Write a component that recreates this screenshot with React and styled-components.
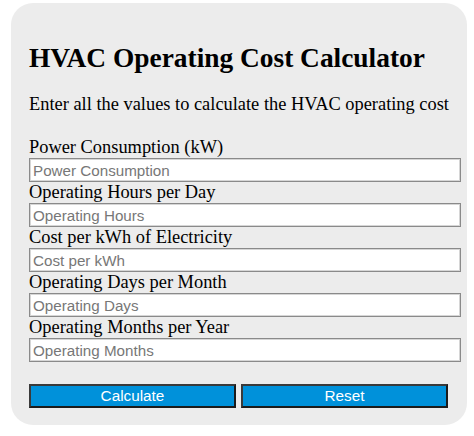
import React from "react";
import styled, { createGlobalStyle } from "styled-components";

const Global = createGlobalStyle`
  html, body { margin: 0; padding: 0; background: #ffffff; }
  body { font-family: "Liberation Serif", "Times New Roman", serif; color: #000; }
`;

const Card = styled.div`
  box-sizing: border-box;
  width: 456px;
  margin: 3px 0 0 11px;
  padding: 22px 6px 17px 18px;
  background: #ececec;
  border-radius: 22px;
`;

const Title = styled.h2`
  font-family: "Liberation Serif", "Times New Roman", serif;
  font-weight: bold;
  font-size: 27.4px;
  line-height: 32px;
  margin: 17px 0 0 0;
`;

const Intro = styled.p`
  font-size: 18.4px;
  line-height: 21px;
  margin: 20px 0 22px 0;
`;

const Field = styled.div`
  display: flex;
  flex-direction: column;
`;

const Label = styled.label`
  font-size: 18.4px;
  line-height: 21px;
`;

const Input = styled.input`
  box-sizing: border-box;
  width: 100%;
  height: 24px;
  margin: 0;
  padding: 1px 3px;
  font-family: "Liberation Sans", Arial, sans-serif;
  font-size: 15.2px;
  border: 1px solid #8a8a8a;
  box-shadow: inset 0 0 0 1px #d6d6d6;
  background: #fff;
  &::placeholder { color: #777; }
`;

const Buttons = styled.div`
  display: flex;
  gap: 5px;
  margin-top: 22px;
`;

const Button = styled.button`
  box-sizing: border-box;
  width: 207px;
  height: 24px;
  padding: 0;
  background: #0091da;
  color: #fff;
  font-family: "Liberation Sans", Arial, sans-serif;
  font-size: 15.3px;
  border: 2px solid #1b1b1b;
  border-top-color: #3a3a3a;
  border-left-color: #3a3a3a;
`;

const fields = [
  ["Power Consumption (kW)", "Power Consumption"],
  ["Operating Hours per Day", "Operating Hours"],
  ["Cost per kWh of Electricity", "Cost per kWh"],
  ["Operating Days per Month", "Operating Days"],
  ["Operating Months per Year", "Operating Months"],
];

export default function App() {
  return (
    <>
      <Global />
      <Card>
        <Title>HVAC Operating Cost Calculator</Title>
        <Intro>Enter all the values to calculate the HVAC operating cost</Intro>
        {fields.map(([label, ph]) => (
          <Field key={label}>
            <Label>{label}</Label>
            <Input placeholder={ph} />
          </Field>
        ))}
        <Buttons>
          <Button>Calculate</Button>
          <Button>Reset</Button>
        </Buttons>
      </Card>
    </>
  );
}
